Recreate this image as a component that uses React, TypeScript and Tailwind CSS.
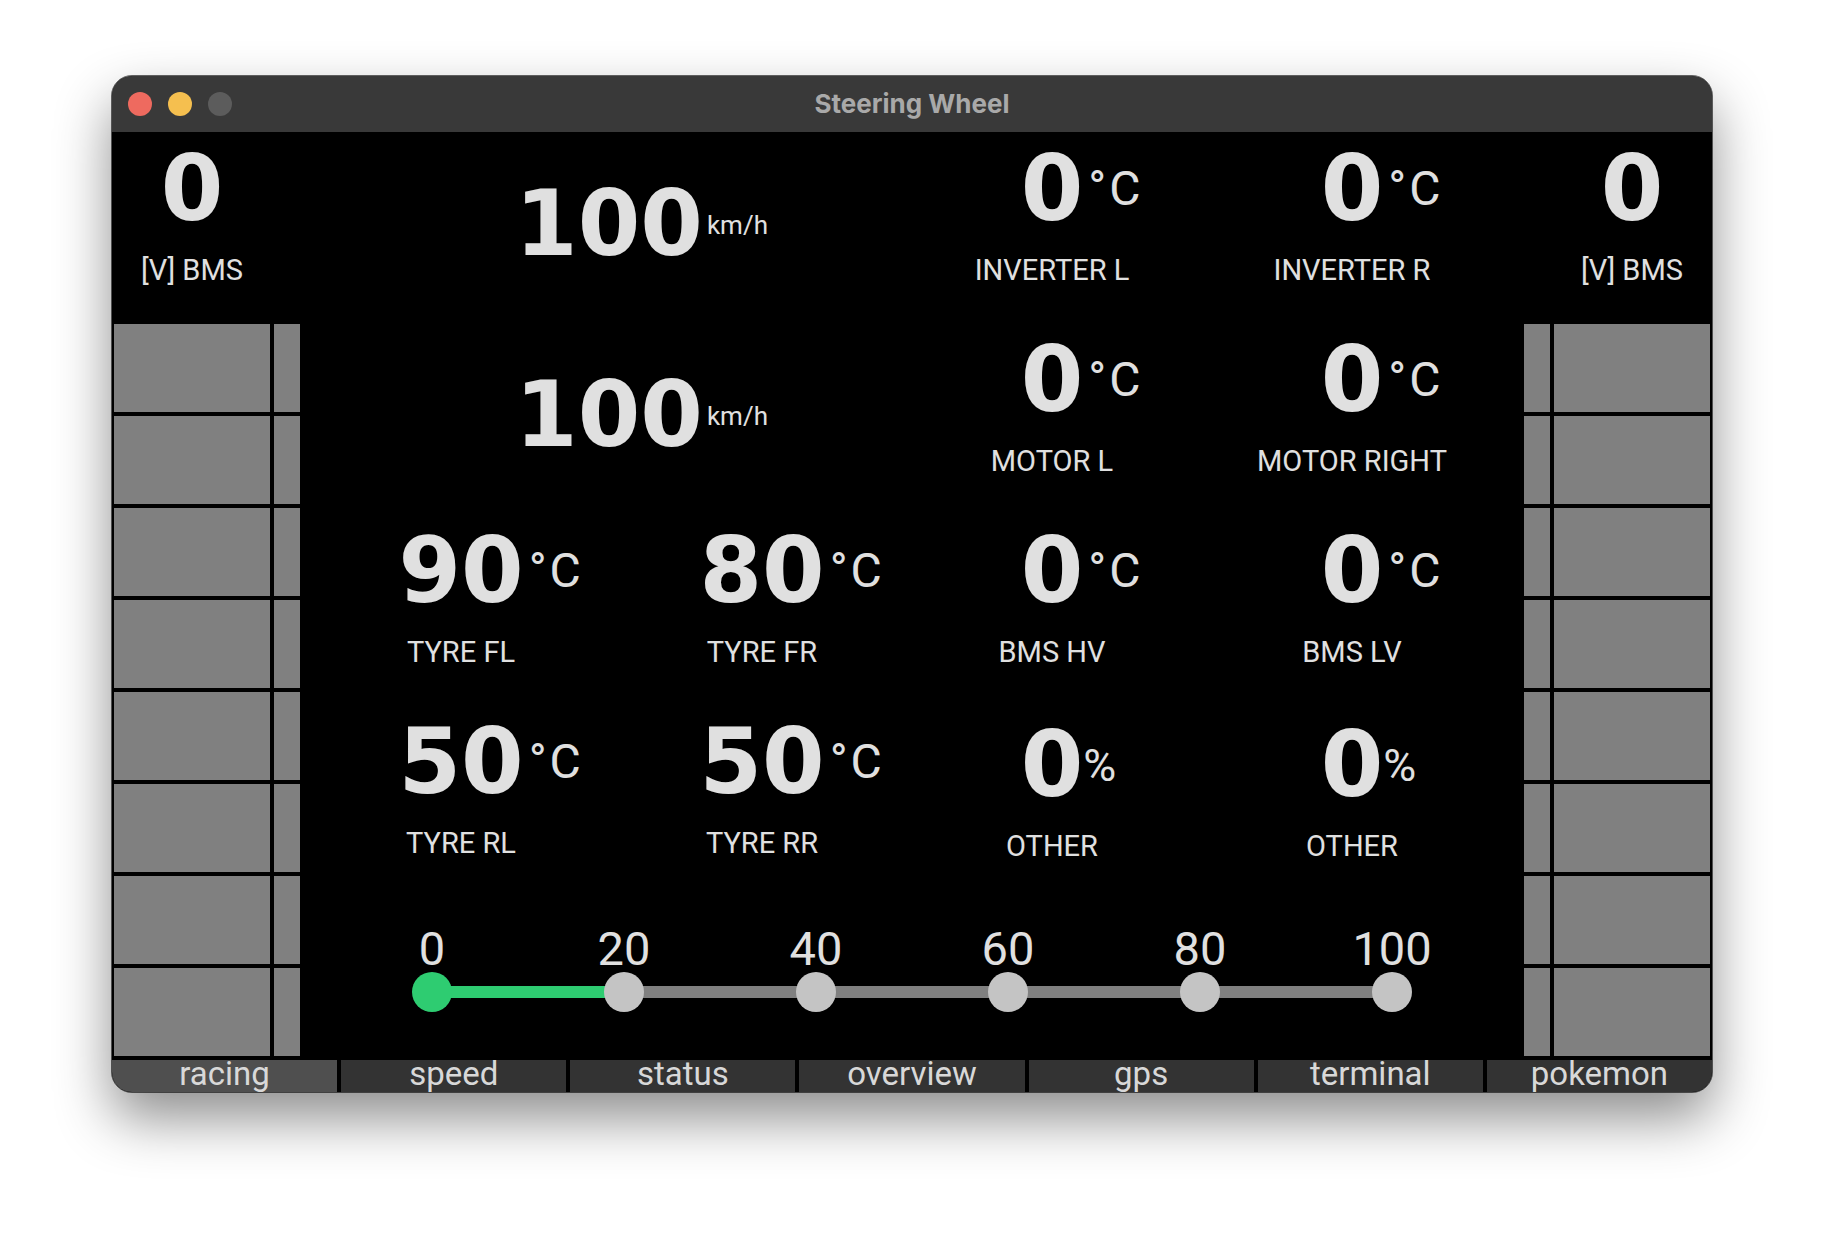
import React from "react";

type Reading = {
    value: string;
    unit?: string;
    label: string;
    percent?: boolean;
};

const topRight: Reading[] = [
    { value: "0", unit: "°C", label: "INVERTER L" },
    { value: "0", unit: "°C", label: "INVERTER R" },
];

const secondRight: Reading[] = [
    { value: "0", unit: "°C", label: "MOTOR L" },
    { value: "0", unit: "°C", label: "MOTOR RIGHT" },
];

const lowerRows: Reading[] = [
    { value: "90", unit: "°C", label: "TYRE FL" },
    { value: "80", unit: "°C", label: "TYRE FR" },
    { value: "0", unit: "°C", label: "BMS HV" },
    { value: "0", unit: "°C", label: "BMS LV" },
    { value: "50", unit: "°C", label: "TYRE RL" },
    { value: "50", unit: "°C", label: "TYRE RR" },
    { value: "0", unit: "%", label: "OTHER", percent: true },
    { value: "0", unit: "%", label: "OTHER", percent: true },
];

const stops = ["0", "20", "40", "60", "80", "100"];
const tabs = ["racing", "speed", "status", "overview", "gps", "terminal", "pokemon"];

const Gauge = ({ value, unit, label, percent }: Reading) => (
    <div className={`flex flex-col items-center ${percent ? "pt-[15px]" : "pt-[12px]"}`}>
        <div className="relative h-[90px] font-['DejaVu_Sans',sans-serif] text-[90px] font-bold leading-[90px]">
            {value}
            {unit &&
                (percent ? (
                    <span className="absolute left-full top-[23px] whitespace-nowrap font-['Roboto',sans-serif] text-[45px] font-normal leading-[45px]">
                        {unit}
                    </span>
                ) : (
                    <span className="absolute left-full top-[21px] ml-[5px] whitespace-nowrap font-['Roboto',sans-serif] text-[48px] font-normal leading-[48px] tracking-[3px]">
                        {unit}
                    </span>
                ))}
        </div>
        <div className="mt-[22px] whitespace-nowrap font-['Roboto',sans-serif] text-[29px] leading-[29px]">
            {label}
        </div>
    </div>
);

const Speed = () => (
    <div className="col-span-2 flex justify-center pr-[10px] pt-[47px]">
        <div className="relative h-[90px] font-['DejaVu_Sans',sans-serif] text-[90px] font-bold leading-[90px]">
            100
            <span className="absolute left-full top-[33px] ml-[4px] whitespace-nowrap font-['Roboto',sans-serif] text-[26px] font-normal leading-[26px]">
                km/h
            </span>
        </div>
    </div>
);

const SidePanel = ({ side }: { side: "left" | "right" }) => (
    <div className={`flex w-[188px] flex-col ${side === "left" ? "pl-[2px]" : "pr-[2px]"}`}>
        <div className={`flex h-[192px] ${side === "left" ? "justify-start" : "justify-end"}`}>
            <div className="w-[156px]">
                <Gauge value="0" label="[V] BMS" />
            </div>
        </div>
        <div
            className={`grid flex-1 grid-rows-8 gap-[4px] ${
                side === "left" ? "grid-cols-[156px_26px]" : "grid-cols-[26px_156px]"
            }`}
        >
            {Array.from({ length: 16 }).map((_, i) => (
                <div key={i} className="bg-[#808080]" />
            ))}
        </div>
    </div>
);

const Slider = () => (
    <div className="mx-auto w-[1000px] pt-[29px]">
        <div className="flex justify-between">
            {stops.map((s) => (
                <div key={s} className="flex w-[40px] justify-center">
                    <span className="whitespace-nowrap font-['Roboto',sans-serif] text-[47px] leading-[47px]">{s}</span>
                </div>
            ))}
        </div>
        <div className="relative flex h-[40px] items-center justify-between">
            {/* track sits under the knobs */}
            <div className="absolute left-[20px] right-[20px] top-[14px] flex h-[12px]">
                <div className="w-1/5 bg-[#2ecc71]" />
                <div className="flex-1 bg-[#808080]" />
            </div>
            {stops.map((s, i) => (
                <div
                    key={s}
                    className={`relative h-[40px] w-[40px] rounded-full ${i === 0 ? "bg-[#2ecc71]" : "bg-[#c4c4c4]"}`}
                />
            ))}
        </div>
    </div>
);

export default function App() {
    return (
        <div className="min-h-[1240px] w-full bg-white pt-[76px]">
            <div className="mx-auto w-[1600px] overflow-hidden rounded-[20px] bg-black text-[#e0e0e0] shadow-[0_26px_55px_rgba(0,0,0,0.45)] outline-1 outline-black/60">
                {/* title bar */}
                <div className="relative flex h-[56px] items-center gap-[16px] bg-[#393939] pl-[16px]">
                    <div className="h-[24px] w-[24px] rounded-full bg-[#ee6a5f]" />
                    <div className="h-[24px] w-[24px] rounded-full bg-[#f5bf4f]" />
                    <div className="h-[24px] w-[24px] rounded-full bg-[#5c5c5c]" />
                    <div className="absolute inset-0 flex justify-center">
                        <span className="font-['Inter',sans-serif] text-[26px] font-bold leading-[56px] text-[#a9a9a9]">
                            Steering Wheel
                        </span>
                    </div>
                </div>

                <div className="flex h-[924px]">
                    <SidePanel side="left" />

                    <div className="flex flex-1 flex-col">
                        <div className="grid grid-cols-[296px_306px_274px_326px] grid-rows-[191px_191px_191px_191px] pl-[13px]">
                            <Speed />
                            {topRight.map((r) => (
                                <Gauge key={r.label} {...r} />
                            ))}
                            <Speed />
                            {secondRight.map((r) => (
                                <Gauge key={r.label} {...r} />
                            ))}
                            {lowerRows.map((r, i) => (
                                <Gauge key={i} {...r} />
                            ))}
                        </div>
                        <Slider />
                    </div>

                    <SidePanel side="right" />
                </div>

                {/* page tabs */}
                <div className="mt-[4px] flex h-[32px] gap-[4px]">
                    {tabs.map((t, i) => (
                        <div
                            key={t}
                            className={`flex flex-1 justify-center ${i === 0 ? "bg-[#4f4f4f]" : "bg-[#333333]"}`}
                        >
                            <span className="font-['Roboto',sans-serif] text-[33px] leading-[28px] text-[#d8d8d8]">{t}</span>
                        </div>
                    ))}
                </div>
            </div>
        </div>
    );
}
